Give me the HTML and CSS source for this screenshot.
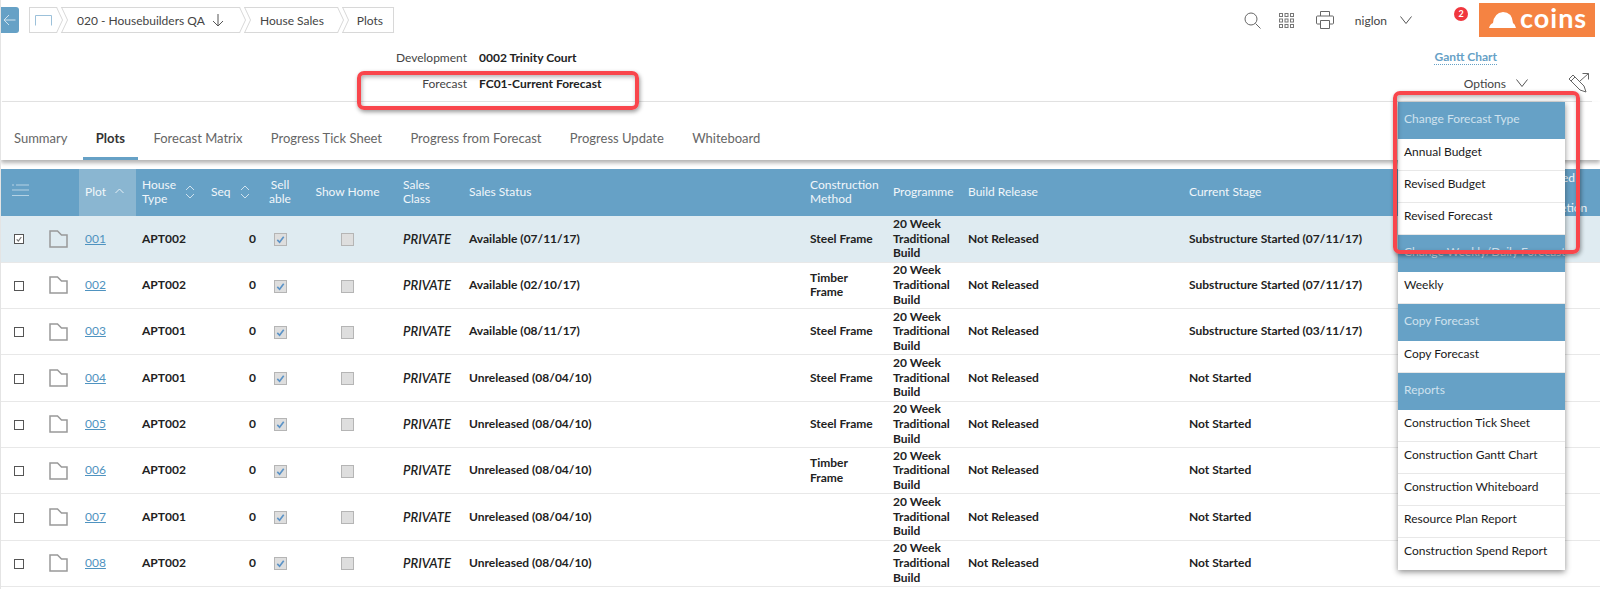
FILE: index.html
```html
<!DOCTYPE html>
<html lang="en">
<head>
    <meta charset="UTF-8">
    <meta name="viewport" content="width=device-width, initial-scale=1.0">
    <title>Plots</title>
    <link rel="stylesheet" href="styles.css">
</head>
<body>

<svg class="sprites" width="0" height="0">
    <symbol id="folder" viewBox="0 0 19 18"><path d="M1 1H8.5L12.5 5H18V17H1Z" fill="none" stroke="#999" stroke-width="1.5"/></symbol>
    <symbol id="tick" viewBox="0 0 12 12"><path d="M2.5 6.5L5 9L9.5 3" fill="none" stroke="currentColor" stroke-width="1.8"/></symbol>
    <symbol id="sort" viewBox="0 0 10 16"><path d="M1 6L5 2L9 6M1 10L5 14L9 10" fill="none" stroke="#cfe2ee" stroke-width="1"/></symbol>
    <symbol id="chevron" viewBox="0 0 12 8"><path d="M.5 .5L6 7.5L11.5 .5" fill="none" stroke="#555" stroke-width="1"/></symbol>
</svg>

<div class="page">
    <header class="topbar">
        <a class="back">
            <svg width="13" height="12" viewBox="0 0 13 12"><path d="M6 1L1 6L6 11M1 6H12.5" fill="none" stroke="#cfe2ee" stroke-width="1"/></svg>
        </a>
        <nav class="crumbs">
            <a class="crumb crumb-home">
                <svg width="17" height="11" viewBox="0 0 17 11"><path d="M.5 10.5V.5H16.5V10.5" fill="none" stroke="#9cc1da" stroke-width="1"/></svg>
            </a>
            <a class="crumb crumb-dev">020 - Housebuilders QA
                <svg width="12" height="13" viewBox="0 0 12 13"><path d="M6 0V12M1 7L6 12L11 7" fill="none" stroke="#555" stroke-width="1"/></svg>
            </a>
            <a class="crumb">House Sales</a>
            <a class="crumb crumb-last">Plots</a>
        </nav>
        <div class="tools">
            <svg class="tool-search" width="17" height="17" viewBox="0 0 17 17"><circle cx="7" cy="7" r="6" fill="none" stroke="#666"/><path d="M11.5 11.5L16.5 16.5" stroke="#666"/></svg>
            <svg class="tool-grid" width="15" height="15" viewBox="0 0 15 15" fill="none" stroke="#777">
                <rect x=".5" y=".5" width="3" height="3"/><rect x="6" y=".5" width="3" height="3"/><rect x="11.5" y=".5" width="3" height="3"/>
                <rect x=".5" y="6" width="3" height="3"/><rect x="6" y="6" width="3" height="3"/><rect x="11.5" y="6" width="3" height="3"/>
                <rect x=".5" y="11.5" width="3" height="3"/><rect x="6" y="11.5" width="3" height="3"/><rect x="11.5" y="11.5" width="3" height="3"/>
            </svg>
            <svg class="tool-print" width="18" height="18" viewBox="0 0 18 18" fill="none" stroke="#666"><path d="M4.5 5V.5H13.5V5M4.5 13H1.5Q.5 13 .5 12V6Q.5 5 1.5 5H16.5Q17.5 5 17.5 6V12Q17.5 13 16.5 13H13.5M4.5 9.5H13.5V17.5H4.5Z"/></svg>
            <span class="user">niglon</span>
            <svg class="tool-chevron" width="12" height="8"><use href="#chevron"/></svg>
            <span class="badge">2</span>
            <div class="logo">
                <svg width="27" height="16" viewBox="0 0 27 16"><path d="M0 16Q1 12 4 11Q5 1 14 0Q23 0 24 11Q26 12 27 16Z" fill="#fff"/></svg>
                <span class="logo-text">coins</span>
            </div>
        </div>
    </header>

    <section class="info">
        <div class="info-row">
            <span class="info-label">Development</span>
            <span class="info-value">0002 Trinity Court</span>
            <a class="gantt">Gantt Chart</a>
        </div>
        <div class="info-row">
            <span class="info-label">Forecast</span>
            <span class="info-value">FC01-Current Forecast</span>
            <span class="options">Options
                <svg width="12" height="8"><use href="#chevron"/></svg>
                <svg class="pencil" width="22" height="21" viewBox="0 0 22 21" fill="none" stroke="#666"><path d="M12 8L20.5 .5M14.5 .5H20.5V6.5"/><path d="M1 6L5 2L16 13L18 19L12 17Z"/><path d="M3 8L7 4"/></svg>
            </span>
        </div>
    </section>

    <nav class="tabs">
        <a class="tab">Summary</a>
        <a class="tab active">Plots</a>
        <a class="tab">Forecast Matrix</a>
        <a class="tab">Progress Tick Sheet</a>
        <a class="tab">Progress from Forecast</a>
        <a class="tab">Progress Update</a>
        <a class="tab">Whiteboard</a>
    </nav>

    <table class="plots">
        <colgroup>
            <col class="w-check"><col class="w-folder"><col class="w-plot"><col class="w-type"><col class="w-seq">
            <col class="w-sell"><col class="w-show"><col class="w-class"><col class="w-status"><col class="w-method">
            <col class="w-prog"><col class="w-release"><col class="w-stage"><col class="w-last">
        </colgroup>
        <thead>
            <tr>
                <th class="menu-cell"><svg width="17" height="13" viewBox="0 0 17 13"><path d="M0 1H2M4 1H17M0 6H17M0 11.5H17" stroke="#b5d2e4"/></svg></th>
                <th></th>
                <th class="sorted">Plot <svg class="sort-up" width="9" height="6" viewBox="0 0 9 6"><path d="M.5 5L4.5 1L8.5 5" fill="none" stroke="#e6f0f6"/></svg></th>
                <th><div class="sortable sortable-type"><span>House<br>Type</span><svg width="10" height="16"><use href="#sort"/></svg></div></th>
                <th><div class="sortable"><span>Seq</span><svg width="10" height="16"><use href="#sort"/></svg></div></th>
                <th class="center">Sell<br>able</th>
                <th class="center">Show Home</th>
                <th>Sales<br>Class</th>
                <th>Sales Status</th>
                <th>Construction<br>Method</th>
                <th>Programme</th>
                <th>Build Release</th>
                <th>Current Stage</th>
                <th class="last-head">Expected<br>&nbsp;<br>Completion</th>
            </tr>
        </thead>
        <tbody>
            <tr class="selected">
                <td class="center"><span class="check"><svg width="10" height="10"><use href="#tick"/></svg></span></td>
                <td class="center"><svg class="folder" width="19" height="18"><use href="#folder"/></svg></td>
                <td><a class="plot-link">001</a></td><td>APT002</td><td class="num">0</td>
                <td class="center"><span class="box"><svg width="11" height="11"><use href="#tick"/></svg></span></td>
                <td class="center"><span class="box"></span></td>
                <td class="private">PRIVATE</td><td>Available (07/11/17)</td><td>Steel Frame</td>
                <td>20 Week Traditional Build</td><td>Not Released</td><td>Substructure Started (07/11/17)</td><td></td>
            </tr>
            <tr>
                <td class="center"><span class="check"></span></td>
                <td class="center"><svg class="folder" width="19" height="18"><use href="#folder"/></svg></td>
                <td><a class="plot-link">002</a></td><td>APT002</td><td class="num">0</td>
                <td class="center"><span class="box"><svg width="11" height="11"><use href="#tick"/></svg></span></td>
                <td class="center"><span class="box"></span></td>
                <td class="private">PRIVATE</td><td>Available (02/10/17)</td><td>Timber Frame</td>
                <td>20 Week Traditional Build</td><td>Not Released</td><td>Substructure Started (07/11/17)</td><td></td>
            </tr>
            <tr>
                <td class="center"><span class="check"></span></td>
                <td class="center"><svg class="folder" width="19" height="18"><use href="#folder"/></svg></td>
                <td><a class="plot-link">003</a></td><td>APT001</td><td class="num">0</td>
                <td class="center"><span class="box"><svg width="11" height="11"><use href="#tick"/></svg></span></td>
                <td class="center"><span class="box"></span></td>
                <td class="private">PRIVATE</td><td>Available (08/11/17)</td><td>Steel Frame</td>
                <td>20 Week Traditional Build</td><td>Not Released</td><td>Substructure Started (03/11/17)</td><td></td>
            </tr>
            <tr>
                <td class="center"><span class="check"></span></td>
                <td class="center"><svg class="folder" width="19" height="18"><use href="#folder"/></svg></td>
                <td><a class="plot-link">004</a></td><td>APT001</td><td class="num">0</td>
                <td class="center"><span class="box"><svg width="11" height="11"><use href="#tick"/></svg></span></td>
                <td class="center"><span class="box"></span></td>
                <td class="private">PRIVATE</td><td>Unreleased (08/04/10)</td><td>Steel Frame</td>
                <td>20 Week Traditional Build</td><td>Not Released</td><td>Not Started</td><td></td>
            </tr>
            <tr>
                <td class="center"><span class="check"></span></td>
                <td class="center"><svg class="folder" width="19" height="18"><use href="#folder"/></svg></td>
                <td><a class="plot-link">005</a></td><td>APT002</td><td class="num">0</td>
                <td class="center"><span class="box"><svg width="11" height="11"><use href="#tick"/></svg></span></td>
                <td class="center"><span class="box"></span></td>
                <td class="private">PRIVATE</td><td>Unreleased (08/04/10)</td><td>Steel Frame</td>
                <td>20 Week Traditional Build</td><td>Not Released</td><td>Not Started</td><td></td>
            </tr>
            <tr>
                <td class="center"><span class="check"></span></td>
                <td class="center"><svg class="folder" width="19" height="18"><use href="#folder"/></svg></td>
                <td><a class="plot-link">006</a></td><td>APT002</td><td class="num">0</td>
                <td class="center"><span class="box"><svg width="11" height="11"><use href="#tick"/></svg></span></td>
                <td class="center"><span class="box"></span></td>
                <td class="private">PRIVATE</td><td>Unreleased (08/04/10)</td><td>Timber Frame</td>
                <td>20 Week Traditional Build</td><td>Not Released</td><td>Not Started</td><td></td>
            </tr>
            <tr>
                <td class="center"><span class="check"></span></td>
                <td class="center"><svg class="folder" width="19" height="18"><use href="#folder"/></svg></td>
                <td><a class="plot-link">007</a></td><td>APT001</td><td class="num">0</td>
                <td class="center"><span class="box"><svg width="11" height="11"><use href="#tick"/></svg></span></td>
                <td class="center"><span class="box"></span></td>
                <td class="private">PRIVATE</td><td>Unreleased (08/04/10)</td><td></td>
                <td>20 Week Traditional Build</td><td>Not Released</td><td>Not Started</td><td></td>
            </tr>
            <tr>
                <td class="center"><span class="check"></span></td>
                <td class="center"><svg class="folder" width="19" height="18"><use href="#folder"/></svg></td>
                <td><a class="plot-link">008</a></td><td>APT002</td><td class="num">0</td>
                <td class="center"><span class="box"><svg width="11" height="11"><use href="#tick"/></svg></span></td>
                <td class="center"><span class="box"></span></td>
                <td class="private">PRIVATE</td><td>Unreleased (08/04/10)</td><td></td>
                <td>20 Week Traditional Build</td><td>Not Released</td><td>Not Started</td><td></td>
            </tr>
        </tbody>
    </table>

    <div class="options-menu">
        <div class="menu-head">Change Forecast Type</div>
        <a class="menu-item">Annual Budget</a>
        <a class="menu-item">Revised Budget</a>
        <a class="menu-item">Revised Forecast</a>
        <div class="menu-head">Change Weekly/Daily Forecast</div>
        <a class="menu-item">Weekly</a>
        <div class="menu-head">Copy Forecast</div>
        <a class="menu-item">Copy Forecast</a>
        <div class="menu-head">Reports</div>
        <a class="menu-item">Construction Tick Sheet</a>
        <a class="menu-item">Construction Gantt Chart</a>
        <a class="menu-item">Construction Whiteboard</a>
        <a class="menu-item">Resource Plan Report</a>
        <a class="menu-item">Construction Spend Report</a>
    </div>

    <div class="callout callout-forecast"></div>
    <div class="callout callout-menu"></div>
</div>

</body>
</html>
```

FILE: styles.css
```css
body {
    font-family: Lato, "Open Sans", sans-serif;
    font-size: 12px;
    margin: 0;
    padding: 0;
    background-color: #fff;
    color: #333;
}

.sprites {
    position: absolute;
}

.page {
    position: relative;
    width: 1600px;
    height: 589px;
    overflow: hidden;
    box-sizing: border-box;
    border-left: 1px solid #e4e4e4;
}

/* top bar */
.topbar {
    display: flex;
    align-items: center;
    height: 40px;
}

.back {
    display: flex;
    align-items: center;
    justify-content: center;
    width: 19px;
    height: 26px;
    margin-left: -1px;
    background-color: #66a1c6;
    border-radius: 0 3px 3px 0;
}

.crumbs {
    display: flex;
    align-items: center;
    margin-left: 10px;
}

.crumb {
    position: relative;
    display: flex;
    align-items: center;
    box-sizing: border-box;
    height: 26px;
    margin-right: 4px;
    padding: 0 20px 0 10px;
    color: #444;
}

.crumb::before,
.crumb::after {
    content: "";
    position: absolute;
    left: 0;
    right: 0;
    height: 13px;
    box-sizing: border-box;
    border: 1px solid #d8d8d8;
}

.crumb::before {
    top: 0;
    border-bottom: 0;
    transform: skewX(25deg);
    transform-origin: bottom;
}

.crumb::after {
    bottom: 0;
    border-top: 0;
    transform: skewX(-25deg);
    transform-origin: top;
}

.crumb-home {
    width: 34px;
    padding: 0 0 0 5px;
    border-left: 1px solid #d8d8d8;
    clip-path: inset(0 -10px 0 0);
}

.crumb-home::before,
.crumb-home::after {
    left: -10px;
}

.crumb-dev {
    width: 179px;
    padding: 0 0 0 10px;
    white-space: nowrap;
}

.crumb-dev svg {
    margin-left: 7px;
}

.crumb-last {
    margin-right: 0;
    padding: 0 10px 0 9px;
    border-right: 1px solid #d8d8d8;
    clip-path: inset(0 0 0 -10px);
}

.crumb-last::before,
.crumb-last::after {
    right: -10px;
}

.tools {
    display: flex;
    align-items: center;
    margin-left: auto;
    margin-right: 5px;
}

.tool-grid {
    margin-left: 18px;
}

.tool-print {
    margin-left: 22px;
}

.user {
    margin-left: 21px;
    color: #444;
}

.tool-chevron {
    margin-left: 13px;
}

.badge {
    align-self: flex-start;
    width: 14px;
    height: 14px;
    margin: 4px 11px 0 42px;
    border-radius: 50%;
    background-color: #f0373e;
    color: #fff;
    font-size: 9px;
    font-weight: 700;
    line-height: 14px;
    text-align: center;
}

.logo {
    display: flex;
    align-items: flex-end;
    gap: 4px;
    box-sizing: border-box;
    width: 116px;
    height: 34px;
    padding: 0 0 9px 10px;
    background-color: #f58342;
}

.logo-text {
    color: #fff;
    font-size: 27px;
    font-weight: 700;
    line-height: 20px;
    letter-spacing: 1px;
}

/* development and forecast */
.info {
    margin: 0 8px 0 1px;
    padding: 4px 0 5px;
    border-bottom: 1px solid #e4e4e4;
}

.info-row {
    display: flex;
    align-items: center;
    height: 26px;
}

.info-label {
    width: 465px;
    color: #444;
    text-align: right;
}

.info-value {
    margin-left: 12px;
    color: #222;
    font-weight: 700;
}

.gantt {
    margin-left: auto;
    margin-right: 95px;
    border-bottom: 1px dotted #66a1c6;
    color: #66a1c6;
    font-weight: 700;
}

.options {
    display: flex;
    align-items: center;
    margin-left: auto;
    margin-right: 2px;
    color: #444;
}

.options svg {
    margin-left: 10px;
}

.options .pencil {
    margin-left: 40px;
}

/* tabs */
.tabs {
    display: flex;
    gap: 2.4px;
    height: 48px;
    margin-bottom: 9px;
    padding: 10px 0 0;
    box-shadow: 0 3px 4px rgba(0, 0, 0, 0.3);
}

.tab {
    box-sizing: border-box;
    height: 48px;
    padding: 18px 13px 0;
    color: #666;
    font-size: 13px;
    line-height: 17px;
}

.tab.active {
    border-bottom: 3px solid #66a1c6;
    color: #333;
    font-weight: 700;
}

/* plots table */
.plots {
    width: 1599px;
    table-layout: fixed;
    border-collapse: collapse;
}

.w-check { width: 37px; }
.w-folder { width: 41px; }
.w-plot { width: 57px; }
.w-type { width: 69px; }
.w-seq { width: 57px; }
.w-sell { width: 36px; }
.w-show { width: 99px; }
.w-class { width: 66px; }
.w-status { width: 341px; }
.w-method { width: 83px; }
.w-prog { width: 75px; }
.w-release { width: 221px; }
.w-stage { width: 337px; }
.w-last { width: 80px; }

.plots th {
    height: 47px;
    box-sizing: border-box;
    padding: 0 0 2px 6px;
    background-color: #66a1c6;
    color: #f1f6fa;
    font-weight: 400;
    line-height: 14px;
    text-align: left;
}

.plots th.center {
    padding: 0 0 2px;
    text-align: center;
}

.plots th.menu-cell {
    padding-left: 11px;
}

.plots th.sorted {
    background-color: #8ab6d1;
}

.plots th.last-head {
    padding-bottom: 0;
    line-height: 15px;
}

.sort-up {
    margin-left: 6px;
    vertical-align: 2px;
}

.sortable {
    display: flex;
    align-items: center;
    justify-content: space-between;
    padding-right: 12px;
}

.sortable-type {
    padding-right: 10px;
}

.plots td {
    height: 46.3px;
    box-sizing: border-box;
    padding: 0 4px 0 6px;
    border-bottom: 1px solid #e8e8e8;
    color: #222;
    font-weight: 700;
    line-height: 14.7px;
}

.plots td.center {
    padding: 0;
    text-align: center;
}

.plots td.num {
    padding-right: 6px;
    text-align: right;
}

.plots td.private {
    font-size: 13px;
    font-style: italic;
    font-weight: 600;
}

.selected td {
    background-color: #dfebf1;
}

.plot-link {
    color: #4f93c0;
    font-weight: 400;
    text-decoration: underline;
}

.check,
.box {
    display: inline-flex;
    align-items: center;
    justify-content: center;
    box-sizing: border-box;
    vertical-align: middle;
}

.check {
    width: 10px;
    height: 10px;
    margin-right: 2px;
    border: 1px solid #555;
    background-color: #fff;
    color: #777;
}

.box {
    width: 13px;
    height: 13px;
    border: 1px solid #b5b5b5;
    background-color: #dedede;
    color: #5b93c7;
}

.folder {
    vertical-align: middle;
}

/* options menu */
.options-menu {
    position: absolute;
    left: 1397px;
    top: 102px;
    width: 167px;
    background-color: #fff;
    box-shadow: 0 2px 6px rgba(0, 0, 0, 0.45);
}

.menu-head {
    height: 37px;
    padding-left: 6px;
    overflow: hidden;
    background-color: #66a1c6;
    color: #cfe2ee;
    line-height: 33px;
    white-space: nowrap;
}

.menu-item {
    display: block;
    box-sizing: border-box;
    height: 32px;
    padding: 4px 0 0 6px;
    border-bottom: 1px solid #e8e8e8;
    color: #1a1a1a;
    line-height: 17px;
}

.menu-item:last-child {
    border-bottom: 0;
}

/* red annotations */
.callout {
    position: absolute;
    box-sizing: border-box;
    border: 4px solid #f9464c;
    border-radius: 7px;
    box-shadow: 1px 2px 4px rgba(0, 0, 0, 0.4), inset 1px 2px 4px rgba(0, 0, 0, 0.3);
}

.callout-forecast {
    left: 356px;
    top: 71px;
    width: 282px;
    height: 39px;
}

.callout-menu {
    left: 1392px;
    top: 91px;
    width: 187px;
    height: 163px;
}
```
